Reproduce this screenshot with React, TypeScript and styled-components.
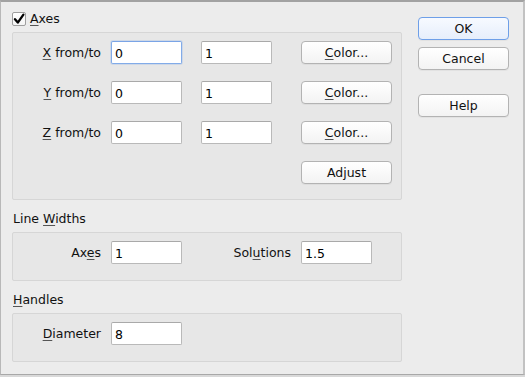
import styled, { createGlobalStyle } from 'styled-components';

const GlobalStyle = createGlobalStyle`
  html, body {
    margin: 0;
    padding: 0;
    background: #d9d9d9;
  }
`;

const Window = styled.div`
  box-sizing: border-box;
  width: 525px;
  height: 375px;
  display: flex;
  background: #ececec;
  border-top: 2px solid #a2a2a2;
  border-left: 1px solid #b8b8b8;
  border-right: 2px solid #c2c2c2;
  border-bottom: 1px solid #a8a8a8;
  font-family: "DejaVu Sans", "Liberation Sans", sans-serif;
  font-size: 12.5px;
  color: #111;
`;

const Main = styled.div`
  width: 390px;
  padding: 10px 0 0 11px;
  display: flex;
  flex-direction: column;
`;

const Side = styled.div`
  width: 91px;
  margin-left: 16px;
  padding-top: 15px;
  display: flex;
  flex-direction: column;
`;

const CheckRow = styled.label`
  display: flex;
  align-items: center;
  height: 14px;
  margin-bottom: 6px;
  line-height: 16px;
`;

const CheckBox = styled.span`
  box-sizing: border-box;
  width: 14px;
  height: 14px;
  margin-right: 4px;
  background: linear-gradient(#ffffff, #f4f4f4);
  border: 1px solid #9e9e9e;
  border-radius: 2px;
  display: flex;
  align-items: center;
  justify-content: center;
`;

const Mn = styled.u`
  text-decoration: underline;
  text-underline-offset: 2px;
  text-decoration-color: #555;
`;

const Group = styled.div<{ $height: number }>`
  box-sizing: border-box;
  height: ${(p) => p.$height}px;
  background: #e7e7e7;
  border: 1px solid #d6d6d6;
  border-radius: 2px;
  padding-top: 8px;
  display: flex;
  flex-direction: column;
  gap: 17px;
`;

const Row = styled.div`
  display: flex;
  align-items: center;
  height: 23px;
`;

const Label = styled.span<{ $width: number }>`
  width: ${(p) => p.$width}px;
  text-align: right;
  margin-right: 10px;
  white-space: nowrap;
`;

const Field = styled.input<{ $focus?: boolean; $gap?: number }>`
  box-sizing: border-box;
  width: 71px;
  height: 23px;
  margin: 0 0 0 ${(p) => p.$gap ?? 0}px;
  padding: 1px 3px 0;
  font: inherit;
  color: #000;
  background: #fff;
  border: 1px solid ${(p) => (p.$focus ? '#82abe8' : '#b9b9b9')};
  border-top-color: ${(p) => (p.$focus ? '#7aa4e6' : '#a9a9a9')};
  border-radius: 2px;
  outline: none;
  box-shadow: ${(p) => (p.$focus ? '0 0 0 1px rgba(130,170,232,0.25)' : 'none')};
`;

const Button = styled.button<{ $primary?: boolean; $gap?: number }>`
  box-sizing: border-box;
  width: 91px;
  height: 23px;
  margin: 0 0 0 ${(p) => p.$gap ?? 0}px;
  padding: 0;
  font: inherit;
  color: #111;
  background: ${(p) =>
    p.$primary
      ? 'linear-gradient(#f7faff, #e6eefb)'
      : 'linear-gradient(#ffffff, #f3f3f3)'};
  border: 1px solid ${(p) => (p.$primary ? '#6e9fe8' : '#b3b3b3')};
  border-radius: 4px;
  box-shadow: 0 1px 0 rgba(0, 0, 0, 0.04);
`;

const SideButton = styled(Button)<{ $top: number }>`
  width: 91px;
  margin: ${(p) => p.$top}px 0 0 0;
`;

const SectionLabel = styled.div`
  line-height: 16px;
  padding: 11px 0 5px 1px;
`;

const Check = () => (
  <svg width="12" height="12" viewBox="0 0 12 12">
    <path d="M2 6.2 L4.8 9.6 L10.4 1.6" fill="none" stroke="#000" strokeWidth="2.3" strokeLinecap="round" strokeLinejoin="round" />
  </svg>
);

const AxisRow = ({ axis, focus }: { axis: string; focus?: boolean }) => (
  <Row>
    <Label $width={88}>
      <Mn>{axis}</Mn> from/to
    </Label>
    <Field defaultValue="0" $focus={focus} />
    <Field defaultValue="1" $gap={19} />
    <Button $gap={29}>
      <Mn>C</Mn>olor...
    </Button>
  </Row>
);

const App = () => {
  return (
    <Window>
      <GlobalStyle />
      <Main>
        <CheckRow>
          <CheckBox>
            <Check />
          </CheckBox>
          <span>
            <Mn>A</Mn>xes
          </span>
        </CheckRow>
        <Group $height={168}>
          <AxisRow axis="X" focus />
          <AxisRow axis="Y" />
          <AxisRow axis="Z" />
          <Row>
            <Button $gap={288}>Adjust</Button>
          </Row>
        </Group>

        <SectionLabel>
          Line <Mn>W</Mn>idths
        </SectionLabel>
        <Group $height={49}>
          <Row>
            <Label $width={88}>
              Ax<Mn>e</Mn>s
            </Label>
            <Field defaultValue="1" />
            <Label $width={109}>
              Sol<Mn>u</Mn>tions
            </Label>
            <Field defaultValue="1.5" />
          </Row>
        </Group>

        <SectionLabel>
          <Mn>H</Mn>andles
        </SectionLabel>
        <Group $height={49}>
          <Row>
            <Label $width={88}>
              <Mn>D</Mn>iameter
            </Label>
            <Field defaultValue="8" />
          </Row>
        </Group>
      </Main>

      <Side>
        <SideButton $primary $top={0}>OK</SideButton>
        <SideButton $top={7}>Cancel</SideButton>
        <SideButton $top={24}>Help</SideButton>
      </Side>
    </Window>
  );
};

export default App;
